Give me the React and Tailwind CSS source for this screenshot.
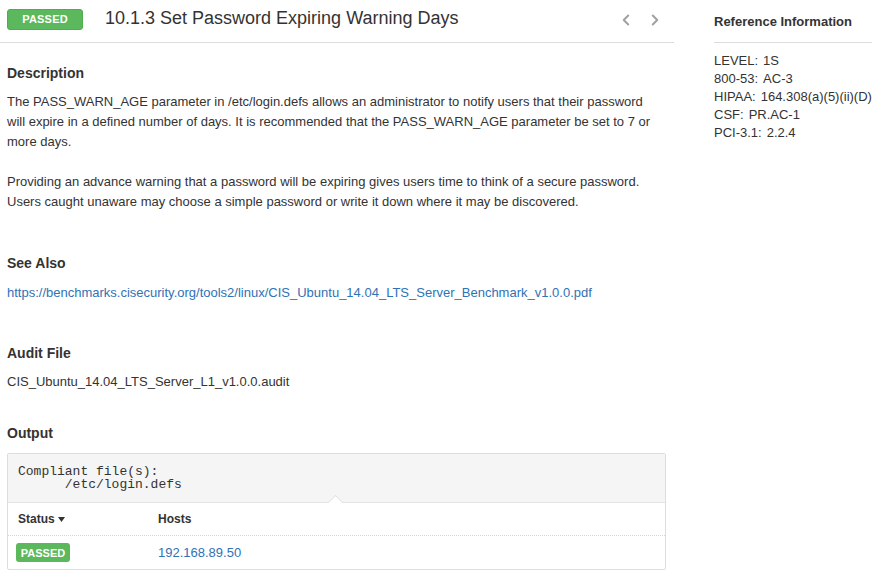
import { ChevronLeft, ChevronRight } from 'lucide-react';

export default function App() {
  const refs = [
    ["LEVEL:", "1S"],
    ["800-53:", "AC-3"],
    ["HIPAA:", "164.308(a)(5)(ii)(D)"],
    ["CSF:", "PR.AC-1"],
    ["PCI-3.1:", "2.2.4"],
  ];

  return (
    <div className="flex w-[872px] h-[581px] overflow-hidden bg-white text-[#333] font-['Liberation_Sans',Arial,sans-serif]">
      {/* Main column */}
      <div className="w-[674px] shrink-0">
        <div className="h-[43px] border-b border-[#ddd] flex items-start pl-[7px] pr-[10px] pt-[9px]">
          <span className="w-[76px] h-[21px] rounded-[3px] bg-[#5cb85c] border border-[#4cae4c] text-white text-[11px] font-bold flex items-center justify-center tracking-[0.2px]">
            PASSED
          </span>
          <h1 className="ml-[22px] text-[18px] leading-[21px] mt-[-1px]">10.1.3 Set Password Expiring Warning Days</h1>
          <div className="ml-auto flex items-center gap-[11px] h-[21px] text-[#a0a0a0]">
            <ChevronLeft size={18} strokeWidth={2.6} />
            <ChevronRight size={18} strokeWidth={2.6} />
          </div>
        </div>

        <div className="pl-[7px] pr-[10px] text-[13px] leading-[20px]">
          <h2 className="mt-[20px] text-[14px] font-bold leading-[20px]">Description</h2>
          <p className="mt-[9px]">
            The PASS_WARN_AGE parameter in /etc/login.defs allows an administrator to notify users that their password will expire in a defined number of days. It is recommended that the PASS_WARN_AGE parameter be set to 7 or more days.
          </p>
          <p className="mt-[20px]">
            Providing an advance warning that a password will be expiring gives users time to think of a secure password. Users caught unaware may choose a simple password or write it down where it may be discovered.
          </p>

          <h2 className="mt-[41px] text-[14px] font-bold">See Also</h2>
          <a className="block mt-[10px] text-[#2f72b5]" href="#">
            https://benchmarks.cisecurity.org/tools2/linux/CIS_Ubuntu_14.04_LTS_Server_Benchmark_v1.0.0.pdf
          </a>

          <h2 className="mt-[40px] text-[14px] font-bold">Audit File</h2>
          <p className="mt-[9px]">CIS_Ubuntu_14.04_LTS_Server_L1_v1.0.0.audit</p>

          <h2 className="mt-[31px] text-[14px] font-bold">Output</h2>
          <div className="mt-[10px] w-[659px] border border-[#ddd] rounded-[2px]">
            <pre className="bg-[#f5f5f5] px-[10px] pt-[11px] pb-[11px] text-[13px] leading-[13px] font-['Liberation_Mono','Courier_New',monospace] text-[#333]">
{`Compliant file(s):
      /etc/login.defs`}
            </pre>
            <div className="relative border-t border-[#e3e3e3]">
              <span className="absolute left-[322px] top-[-6px] w-[11px] h-[11px] bg-white border-t border-l border-[#e3e3e3] rotate-45"></span>
              <div className="relative flex h-[33px] items-center border-b border-dotted border-[#d5d5d5] text-[12px] font-bold">
                <div className="w-[150px] pl-[10px] flex items-center gap-[3px]">
                  Status
                  <svg width="7" height="5" viewBox="0 0 7 5" className="mt-[1px]">
                    <path d="M0 0 H7 L3.5 5 Z" fill="#333" />
                  </svg>
                </div>
                <div>Hosts</div>
              </div>
              <div className="flex h-[33px] items-center text-[13px]">
                <div className="w-[150px] pl-[8px]">
                  <span className="inline-flex w-[54px] h-[19px] items-center justify-center rounded-[3px] bg-[#5cb85c] text-white text-[11px] font-bold">
                    PASSED
                  </span>
                </div>
                <a className="text-[#2f72b5]" href="#">192.168.89.50</a>
              </div>
            </div>
          </div>
        </div>
      </div>

      {/* Side column */}
      <div className="ml-[40px] flex-1">
        <div className="h-[43px] border-b border-[#ddd] flex items-center">
          <h3 className="text-[13px] font-bold mt-[1px]">Reference Information</h3>
        </div>
        <ul className="pt-[9px] text-[13px] leading-[18px]">
          {refs.map(([k, v]) => (
            <li key={k} className="whitespace-nowrap">
              {k}
              <span className="ml-[5px]">{v}</span>
            </li>
          ))}
        </ul>
      </div>
    </div>
  );
}
